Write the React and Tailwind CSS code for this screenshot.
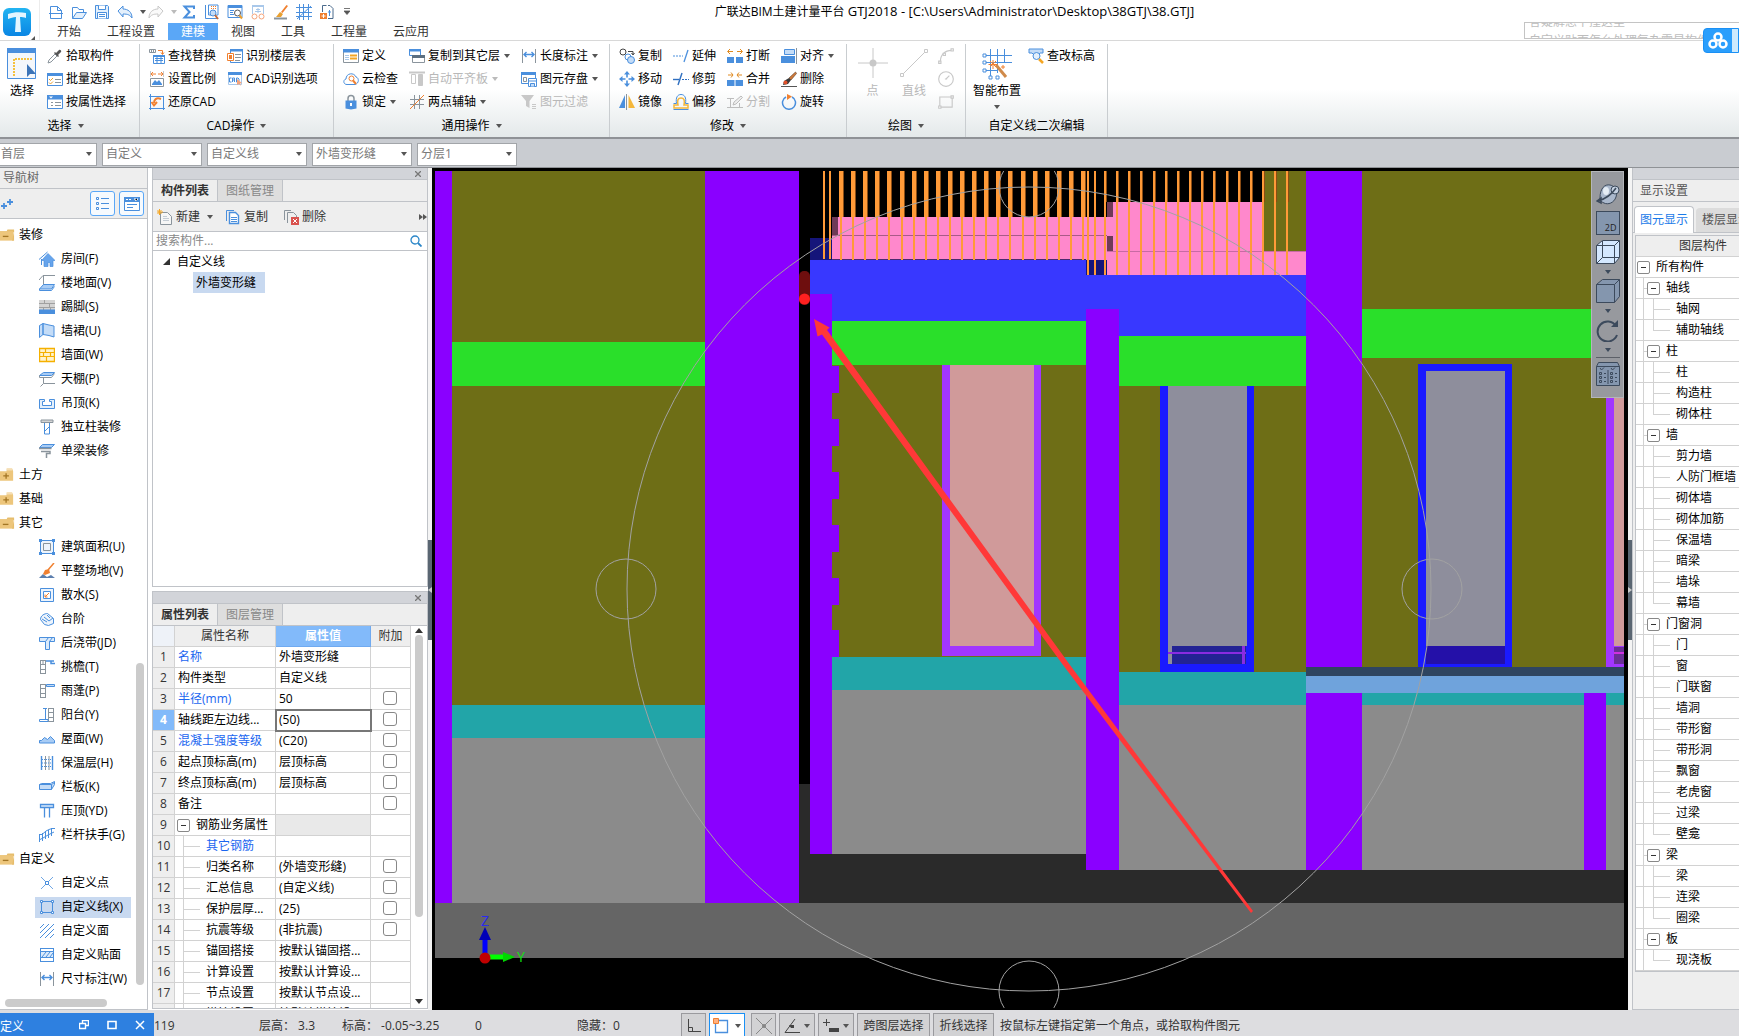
import React from "react";

const B = "#4a8fdd";
const L = "#c4dcf7";
const O = "#f08030";
const G = "#8a949c";
const D = "#c8c8c8";

/* ---------- icon drawings, 16 x 16 ---------- */
const art = {
  newDoc: <g fill="none" stroke={B}><path d="M2.5 14.5v-12h7l4 4v8z" fill="#fff" /><path d="M9.5 2.5v4h4M1 9.5h14" /></g>,
  open: <g fill="none" stroke={B}><path d="M1.5 14.500v-11h5l1.500 2h4.500v3" /><path d="M1.500 14.500l4-6h10l-4 6z" fill="#e4f0fc" /></g>,
  save: <g fill="none" stroke={B}><path d="M1.500 1.500h12l1 1v12h-13z" fill="#e4f0fc" /><path d="M4.500 1.500v4h7v-4M3.500 14.500v-6h9v6M5 10.500h6M5 12.500h6" fill="#fff" /></g>,
  undo: <path d="M1 7l5-5v3c5 0 9 3 9 9-2-3-4-4-9-4v3z" fill="#e4f0fc" stroke={B} />,
  redo: <path d="M15 7l-5-5v3c-5 0-9 3-9 9 2-3 4-4 9-4v3z" fill="#fafafa" stroke={D} />,
  sum: <path d="M13 5V2.500H3.500L8.500 8l-5 5.500H13V11" fill="none" stroke={B} strokeWidth="2" />,
  findTable: <g><path d="M1.500 1v13.500H14M4.500 1v10H14V1z" fill="#fff" stroke={B} /><path d="M7 2h1v1H7zM9 2h1v1H9zM11 2h1v1h-1zM7 4h1v1H7zM9 4h1v1H9zM11 4h1v1h-1z" fill={O} /><circle cx="9" cy="9" r="3" fill={L} stroke={B} /><path d="M11 11l3 4" stroke="#c56a3a" strokeWidth="2" /></g>,
  viewTable: <g><path d="M1 1.500h14v12H1z" fill="#fff" stroke={B} /><path d="M1 1h14v3H1z" fill={B} /><path d="M3 6.500h4M3 8.500h3M3 10.500h4" stroke={B} /><circle cx="10.500" cy="9" r="3" fill="#fff" stroke="#555" /><path d="M12.500 11.500l2.500 3" stroke="#e9a030" strokeWidth="2" /></g>,
  glasses: <g fill="none"><path d="M2.500 10V1.500h11V10" stroke="#a9c8ea" /><path d="M2 1h12v2H2z" fill="#a9c8ea" /><path d="M8 4v5M6 5.500h4M5 7.500h6" stroke="#a9c8ea" /><circle cx="4.500" cy="12.500" r="2.500" stroke="#f5a37a" /><circle cx="11.500" cy="12.500" r="2.500" stroke="#f5a37a" /></g>,
  broom: <g><path d="M1 14.500h13" stroke={G} strokeWidth="2" /><path d="M13.500 1L8 8l1.500 1L15 2z" fill={O} /><path d="M7 8l3 2-2 3H3z" fill="#e9a030" /></g>,
  netGrid: <path d="M3.500 0v16M7.500 0v16M12.500 0v16M0 3.500h16M0 8.500h16M0 12.500h16M1 15L15 2" stroke={B} fill="none" />,
  addDoc: <g><path d="M3.500 8V1.500h4M9 1.500h2l3 3v10H9" fill="none" stroke="#4a6a8c" /><path d="M1 9h7v6H1z" fill={O} /><path d="M4.500 10v4M2.500 12h4" stroke="#fff" /><path d="M9 8h3M10.500 6v6" stroke={B} /></g>,
  dropper: <g><path d="M1 15l1-3 6-6 2 2-6 6z" fill="#fff" stroke={G} /><path d="M7 5l4 4 1-1-1-1 3-3c1-1-1-3-2-2L9 5 8 4z" fill="#555" /></g>,
  batch: <g><path d="M.5 2.500h15v12H.5z" fill="#fff" stroke={B} /><path d="M0 2h16v3H0z" fill={B} /><path d="M8 8.500h6M8 11.500h6" stroke={G} /><path d="M2 8l1.500 1.500L6 7M2 11.500L3.500 13 6 10.500" stroke="#e9a030" fill="none" /></g>,
  byProp: <g><path d="M.5 1.500h15v13H.5z" fill="#fff" stroke={B} /><path d="M0 1h16v4.500H0z" fill={B} /><path d="M2 2.500h4L4 4.500z" fill="#fff" /><path d="M4 8.500h2M8 8.500h6M4 11.500h2M8 11.500h6" stroke={G} /></g>,
  replace: <g><path d="M.5 1.500h6v3h-6zM2.500 1.500v3M4.500 1.500v3" fill="none" stroke={G} /><path d="M9 2.500h4.500V6M12 4.500l1.500 2 1.500-2" fill="none" stroke={O} /><path d="M4.500 7.500h11v8h-11z" fill="#fff" stroke={B} /><path d="M4 7h12v2H4z" fill={B} /><path d="M6 10.500h8M6 12.500h8M8 9v6M12 9v6" stroke={B} /></g>,
  scale: <g><path d="M1.500 0v6M14.500 0v6" stroke={D} /><path d="M2 3h5M9 3h5M4 1L2 3l2 2M12 1l2 2-2 2" stroke={O} fill="none" /><path d="M1.500 7.500h13v8h-13z" fill="#fff" stroke={G} /><path d="M3 14v-1l3-4 2 2 2-2 3 4v1z" fill={B} /></g>,
  restore: <g><path d="M1.500 0v16M14.500 2v14M0 2.500h14M0 14.500h16" stroke={B} fill="none" /><path d="M12 5c-5-2-7 1-7 4M2.500 8L5 11.500 8 8" stroke={O} strokeWidth="2" fill="none" /></g>,
  floors: <g><path d="M3.500 1.500h12v13h-12z" fill="#fff" stroke={B} /><path d="M3 1h13v2.500H3z" fill={B} /><path d="M.5 5.500h6v7h-6z" fill="#fff" stroke={O} /><path d="M2 7h3v4H2z" fill={O} /><path d="M8 6.500h6M8 9.500h6M8 12.500h5" stroke={G} /></g>,
  cadOpt: <g><path d="M1.500 1.500h13v12h-13z" fill="#fff" stroke="#a9c8ea" /><path d="M1 1h14v3H1z" fill={B} /><path d="M4.500 7h-2v4h2M5.500 11V7h2v4M5.500 9h2M9.500 7v4h1.500l1-1V8l-1-1z" fill="none" stroke={B} /><path d="M10 8l5 4-2 .5 1 2.500-2-2-2 1z" fill="#f5a37a" /></g>,
  define: <g><path d="M.5 1.500h15v13H.5z" fill="#fff" stroke={G} /><path d="M0 1h16v3.500H0z" fill={B} /><path d="M2 7.500h4M2 9.500h4M2 11.500h4" stroke="#a9c8ea" /><path d="M7 6.500h7v5H7z" fill="#f5a623" /><path d="M7 9h7" stroke="#fff" /></g>,
  cloudCheck: <g><path d="M4 13.500c-4 0-4-5-1-5.500 0-6 8-7 10-2 3 .5 3.500 6.500-1 7.500z" fill="#fff" stroke={B} /><circle cx="8.500" cy="7.500" r="2.500" fill="none" stroke={O} /><path d="M10 9.500l3 3.500" stroke={O} strokeWidth="2" /></g>,
  lock: <g><path d="M5 7V4.500c0-4 6-4 6 0V7" fill="none" stroke={G} strokeWidth="1.500" /><path d="M2.500 6.500h11v8l-5.500 1-5.500-1z" fill={B} /><path d="M8 9v3" stroke="#fff" strokeWidth="2" /></g>,
  copyFloor: <g><path d="M.5 1.500h11v6h-11z" fill="#fff" stroke={B} /><path d="M0 1h12v2.500H0z" fill={B} /><path d="M3.500 7.500h12v7h-12z" fill="#fff" stroke={G} /><path d="M3 7h13v3H3z" fill="#5c6f80" /></g>,
  autoFlush: <g fill="none" stroke={D}><path d="M0 1.500h16" strokeWidth="2" /><path d="M2.500 3.500h4v9h-4z" /><path d="M9.500 3.500h4v11h-4z" fill={D} /></g>,
  twoPoint: <g fill="none"><path d="M5.500 1v14M10.500 1v14M1 5.500h14M1 10.500h14" stroke={G} /><path d="M1 15L15 1" stroke={O} /></g>,
  dim: <g fill="none" stroke={B}><path d="M1.500 1v14M14.500 1v14" stroke={G} /><path d="M3 6.500h10M5.500 4L3 6.500 5.500 9M10.500 4L13 6.500 10.500 9" strokeWidth="1.400" /></g>,
  store: <g><path d="M.5 1.500h14v11H.5z" fill="#fff" stroke={B} /><path d="M0 1h15v3H0z" fill={B} /><path d="M2.500 6.500h3v4h-3z" fill="none" stroke={G} /><path d="M7.500 7.500h8v8h-8z" fill="#fff" stroke={B} /><path d="M7.500 10h8M9.500 15.500v-3h4v3" stroke={B} fill={L} /></g>,
  filter: <g><path d="M0 1h13L8.500 7v7L5 12V7z" fill={D} /><path d="M11 10.500h4M11 12.500h4M11 14.500h4" stroke={D} /></g>,
  copy2: <g fill="#fff"><circle cx="4" cy="4" r="3" stroke="#444" /><path d="M9 3.500h5v3M12.500 5l1.500 2 1.500-2" fill="none" stroke="#444" /><circle cx="9" cy="9" r="3" stroke={B} /><circle cx="12" cy="12" r="3.500" fill={L} stroke={B} /></g>,
  move: <g fill={B}><path d="M8 0l3 3.500H5zM8 16l3-3.500H5zM0 8l3.500-3v6zM16 8l-3.500-3v6z" /><path d="M8 3v3.500M8 9.500V13M3 8h3.500M9.500 8H13" stroke={B} strokeWidth="1.600" /></g>,
  mirror: <g><path d="M6 1v13H0z" fill={B} /><path d="M9.500 1v13H16z" fill="#f5b73a" /><path d="M7.500 0v16" stroke={G} /></g>,
  extend: <g fill="none"><path d="M0 8h10" stroke={B} strokeDasharray="2 1" /><path d="M15 2l-4 12" stroke={B} strokeWidth="1.300" /></g>,
  trim: <g fill="none" stroke="#2f6fc0"><path d="M0 8.500h6" strokeWidth="1.400" /><path d="M9 2L5 14" strokeWidth="1.400" /><path d="M9 8.500h7" strokeDasharray="2 1" /></g>,
  offset: <g fill="none"><path d="M1 11h4c-1-5 0-7 3-7s4 2 3 7h4v3H1z" stroke="#f5b73a" strokeWidth="1.500" /><path d="M.5 9.500h3c-1-6 1-9 4.500-9s5.500 3 4.500 9h3M.5 15.500h15" stroke={B} /></g>,
  split2: <g><path d="M0 9h7v6H0zM9 9h7v6H9z" fill={B} /><path d="M1 3.500h5M10 3.500h5M3 1L.5 3.500 3 6M13 1l2.500 2.500L13 6" fill="none" stroke="#e08a20" /></g>,
  merge: <g><path d="M0 9h7.500v6H0zM8.500 9H16v6H8.500z" fill={B} /><path d="M1 4h5M10 4h5M4 1.500L6 4 4 6.500M12 1.500L10 4l2 2.500" fill="none" stroke="#e08a20" /></g>,
  divide: <g fill="none" stroke="#bdbdbd"><path d="M0 4.500h7M0 13.500h16M3.500 4v10M12.500 9v5" /><path d="M6 11l1-3 7-6 1.500 1.500L9 10z" fill="#eee" /></g>,
  align: <g><path d="M3.500 1.500h10v5h-10z" fill={L} stroke={B} /><path d="M0 8h14v7H0z" fill={B} /><path d="M15.500 0v16" stroke={G} /></g>,
  brush: <g><path d="M14.500 1L8 7l2 2 5.500-6.500z" fill="#d07a3a" stroke="#5a3a20" strokeWidth=".6" /><path d="M8 7l2 2-3 4-5 1 1-4z" fill="#3a3a3a" /><circle cx="4.500" cy="11.500" r="2" fill="#e0502a" /><path d="M0 15.500h16" stroke="#555" /></g>,
  rotate: <g fill="none"><path d="M5 3a6.500 6.500 0 1 0 6 0" stroke={B} strokeWidth="1.500" /><path d="M6 0l5 2.500L6 6z" fill={O} /></g>,
  arc: <g fill="none" stroke={D}><path d="M3 13C3 7 7 3 13 3" /><path d="M1.500 12.500h2v2h-2zM12.500 1.500h2v2h-2zM5.500 5.500h2v2h-2z" fill="#fff" /></g>,
  circ: <g fill="none" stroke={D}><circle cx="8" cy="8" r="6.500" /><path d="M8 8l3-3M7 8h2" /></g>,
  rect: <g fill="none" stroke={D}><path d="M2.500 3.500h11v9h-11z" /><path d="M1.500 11.500h2v2h-2zM12.500 2.500h2v2h-2z" fill="#fff" /></g>,
  elev: <g><path d="M1 1h14v4h-3l-4 4-4-4H1z" fill={L} stroke={B} /><circle cx="8.500" cy="8" r="3.500" fill="#e4f0fc" stroke={B} /><path d="M11 11l4 4" stroke="#f5a623" strokeWidth="2.500" /></g>,
  house: <g><path d="M0 8.500L8.500 1M2.500 8v6" stroke={B} fill="none" /><path d="M9 2.500l7 7h-2v6h-3v-4H9v4H5v-6H2.500z" fill="#66a4ec" stroke={B} strokeWidth=".7" /></g>,
  floorSlab: <g fill="none"><path d="M0 5l4-4.500h12M4.500 1v9" stroke={G} /><path d="M.5 14l4-4.500h11l-3 4.500z" fill="#a8ccf5" stroke={B} /><path d="M.5 14v1.500h12l3-4" stroke={B} /></g>,
  skirting: <g><path d="M0 1h16v10H0z" fill="#d4d4d4" /><path d="M0 4.500h16M0 8.500h16M5.500 1v3M10.500 5v3M4.500 9v2M11.500 9v2" stroke="#a0a0a0" /><path d="M0 10.500h16V15H0z" fill={B} /></g>,
  dado: <path d="M.5 2.500L4 .5v11L.5 14.500zM4 .5l6 1.500 5 1v11l-5-1.500-6-1z" fill={L} stroke={B} />,
  brick: <g><path d="M.5 1.500h15v13H.5z" fill="#fff3cc" stroke="#f5b000" strokeWidth="1.400" /><path d="M1 5.500h14M1 9.500h14M6.500 2v3M11.500 6v3M4.500 6v3M7.500 10v4" stroke="#f5b000" strokeWidth="1.200" /></g>,
  ceiling: <g fill="none"><path d="M.5 4.500l4-3h11l-3 3z" fill="#a8ccf5" stroke={B} /><path d="M.5 4.500v2h12l3-4M4.500 7v5.500M4.500 12.500H16M4.500 12.500l-3 3" stroke={G} /></g>,
  suspended: <path d="M.5 4.500h5v2h-2v4h9v-4h-2v-2h5v9H.500z" fill="#e4f0fc" stroke={B} />,
  pillar: <g><path d="M2 1h12v2.500H2z" fill="#d4d4d4" stroke={G} /><path d="M5.500 4v11h5V4" fill="#fff" stroke={B} /><path d="M6 12l4-4" stroke={B} /></g>,
  beam: <g fill="none"><path d="M.5 4.500l3-3h12l-3 3z" fill="#a8ccf5" stroke={B} /><path d="M.5 4.500v1h12M2 8.500h9v2H7.500V15" stroke={G} strokeWidth="1.500" /></g>,
  area: <g fill="none"><path d="M1.500 1.500h13v13h-13z" fill="#edf4fc" stroke={B} /><path d="M4.500 4.500h7v7h-7z" stroke={G} /><path d="M0 0h3v3H0zM13 0h3v3h-3zM0 13h3v3H0zM13 13h3v3h-3z" fill={B} /></g>,
  level: <g><path d="M0 15l4-4 4 3 4-2 4 3z" fill="#5c7fae" /><path d="M15 0L9 7" stroke={O} strokeWidth="1.500" /><path d="M6 7l4-1 1 4-5 2-2-1z" fill={O} /></g>,
  apron: <g fill="none"><path d="M1.500 1.500h13v13h-13z" stroke={B} fill="#edf4fc" /><path d="M4.500 4.500h7v7h-7z" stroke={B} fill="#fff" /><path d="M10 6l-4 4M6 7.500V10h2.500" stroke={O} /></g>,
  steps: <g fill="none" stroke={B}><path d="M1.500 8.500c0-4 4-6 7-6l6 5v5l-5 2-4-1z" fill="#edf4fc" /><path d="M3 8l5 3M5 6l5 4 4-3M8 4l3 3" /></g>,
  castBelt: <path d="M.5 2.500h15v4h-5v8h-4v-8h-6zM6.500 6.500l3-4M10.500 6.500l3-4" fill="#dcebfb" stroke={B} />,
  cornice: <g fill="none"><path d="M1.500 1v14M6.500 1v14M1.500 1.500h5M1.500 5.500h5M1.500 10.500h5M1.500 14.500h5M4 2v3" stroke={G} /><path d="M7 2h8M12 2v2.500h4" stroke={B} strokeWidth="1.500" /></g>,
  canopy: <g fill="none"><path d="M1.500 1v14M6.500 1v14M1.500 1.500h5M1.500 5.500h5M1.500 10.500h5M1.500 14.500h5" stroke={G} /><path d="M7.500 1.500h8v2h-8z" stroke={B} fill={L} /></g>,
  balcony: <g fill="none"><path d="M9.500 1v14M14.500 1v14M9.500 1.500h5M9.500 5.500h5M9.500 10.500h5M9.500 14.500h5" stroke={G} /><path d="M4 1.500h4M6.500 2v10M1 12.500h8v2H.5v-2z" stroke={B} /></g>,
  roof: <path d="M.5 12V9.500h2l3-3 3 2 3-3 4 4V12z" fill="#a8ccf5" stroke={B} />,
  insul: <g fill="none"><path d="M2.500 1v14M13.500 1v14" stroke={B} strokeWidth="1.400" /><path d="M6.500 1v14M10 1v14" stroke={G} /><path d="M3 4.500h10M3 8h10M3 11.500h10" stroke={B} strokeDasharray="1 1" /></g>,
  railSlab: <path d="M.5 5.500l2-1h9l4-2v3l-3 5h-12zM12.500 5.500v5M.5 5.500h12l3-2" fill={L} stroke={B} />,
  coping: <path d="M1.500 1.500h13v3h-13zM5.500 4.500v10M10.500 4.500v10" fill="#dcebfb" stroke={B} strokeWidth="1.300" />,
  rail: <path d="M.5 15V7M3.500 14V6M6.500 12V4M9.500 11V3M12.500 9V1M0 7.500h3L7 4l3-1.500 3-1h3M0 13l4-2 5-3 6-3" fill="none" stroke={B} />,
  cPoint: <g fill="none" stroke={B}><path d="M2 2l12 12M14 2L2 14" strokeWidth=".8" /><path d="M6.500 6.500h3v3h-3z" fill="#fff" /></g>,
  cLine: <g fill="none" stroke={B}><path d="M2.500 2.500h11v11h-11z" /><path d="M1.500 1.500h2v2h-2zM12.500 1.500h2v2h-2zM1.500 12.500h2v2h-2zM12.500 12.500h2v2h-2z" fill="#fff" /></g>,
  cFace: <path d="M1 5l4-4M1 10l9-9M1 15L15 1M6 15l9-9M11 15l4-4" stroke={B} fill="none" />,
  cStick: <g fill="none" stroke={B}><path d="M1 1.500h14M1 14.500h14M1.500 1v14M14.500 1v14" /><path d="M1.500 4.500h13v6h-13z" fill="#dcebfb" /><path d="M3 10l4-5M7 10l4-5M11 10l3-4" /></g>,
  folderOpen: <g><path d="M0 4h7l1-2h7v3H0z" fill="#e6bd6c" /><path d="M0 4h14v10H0z" fill="#edc67c" /><path d="M15 3v11h-2z" fill="#e6bd6c" /><path d="M3 9.500h6" stroke="#a37625" strokeWidth="1.400" /></g>,
  folderShut: <g><path d="M7 1h6l1 3v10H0V4h7z" fill="#edc67c" /><path d="M7 2.500h6" stroke="#fff" strokeWidth=".7" /><path d="M3.500 9h6M6.500 6v6" stroke="#a37625" strokeWidth="1.400" /></g>,
  newItem: <g><path d="M3.500 3.500h7l4 4v8h-11z" fill="#f6f6f6" stroke={G} /><path d="M6 7.500h4M6 9.500h6M6 11.500h6" stroke="#c4ccd4" /><path d="M2.500 0v6M0 3h6M.5 1l4 4M4.500 1l-4 4" stroke="#f5a623" /></g>,
  copyItem: <g><path d="M1.500 12V1.500H9" fill="none" stroke={B} /><path d="M4.500 3.500h6l3 3v8h-9z" fill="#fff" stroke={B} strokeWidth="1.400" /><path d="M6 8.500h6M6 10.500h6M6 12.500h6" stroke={B} /></g>,
  delItem: <g><path d="M1.500 11V1.500H8M4.500 14V3.500h6l3 3V8" fill="none" stroke={G} /><path d="M8 8h8v8H8z" fill="#d9534f" /><path d="M10 10l4 4M14 10l-4 4" stroke="#fff" /></g>,
};

function Icon({ name, className = "size-4" }) {
  return (
    <svg viewBox="0 0 16 16" className={"shrink-0 " + className} aria-hidden="true">
      {art[name]}
    </svg>
  );
}

function Caret({ className = "text-[#555]" }) {
  return (
    <svg viewBox="0 0 6 4" className={"h-1 w-1.5 shrink-0 " + className} aria-hidden="true">
      <path d="M0 0h6L3 4z" fill="currentColor" />
    </svg>
  );
}

/* ---------- title bar and ribbon ---------- */
const quick = ["newDoc", "open", "save", "undo", "redo", "sum", "findTable", "viewTable", "glasses", "broom", "netGrid", "addDoc"];
const tabs = ["开始", "工程设置", "建模", "视图", "工具", "工程量", "云应用"];

function Header() {
  return (
    <header className="relative flex h-[41px] shrink-0 border-b border-[#d8d8d8] bg-white">
      <div className="relative w-10 shrink-0 border-r border-[#ececec] pl-[3px] pt-2">
        <svg viewBox="0 0 28 28" className="size-7" aria-label="GTJ">
          <defs>
            <linearGradient id="lg" x1="0" y1="0" x2="0" y2="1">
              <stop offset="0" stopColor="#22b4f2" />
              <stop offset="1" stopColor="#0a86e4" />
            </linearGradient>
          </defs>
          <rect width="28" height="28" rx="6" fill="url(#lg)" />
          <path d="M5 6c6-2 12-2 18-1v5c-2-1-4-1-6-1l1 15h-6l1-15c-3 0-5 1-8 2z" fill="#e4f6ff" />
        </svg>
        <svg viewBox="0 0 4 4" className="absolute right-1 bottom-0 size-1"><path d="M4 0v4H0z" fill="#555" /></svg>
      </div>
      <div className="flex min-w-0 flex-1 flex-col">
        <div className="flex h-6 items-center gap-[7px] pl-2">
          {quick.map((q) => (
            <React.Fragment key={q}>
              <button aria-label={q} className="flex"><Icon name={q} /></button>
              {q === "undo" && <Caret className="-mr-[5px] text-[#555]" />}
              {q === "redo" && <Caret className="-mr-[3px] text-[#bbb]" />}
            </React.Fragment>
          ))}
          <svg viewBox="0 0 6 7" className="ml-0.5 h-[7px] w-1.5"><path d="M0 .5h6M0 3h6L3 6.500z" fill="#555" stroke="#555" strokeWidth=".8" /></svg>
        </div>
        <nav className="flex h-[17px] pl-1">
          {tabs.map((t) => (
            <button key={t} className={"flex items-center px-[13px] " + (t === "建模" ? "bg-[#5aa7f7] text-white" : "text-[#333]")}>
              {t}
            </button>
          ))}
        </nav>
      </div>
      <h1 className="absolute inset-x-0 top-0.5 pl-[170px] text-center leading-[18px] text-black">
        广联达BIM土建计量平台 <span className="text-[13px]">GTJ2018 - [C:\Users\Administrator\Desktop\38GTJ\38.GTJ]</span>
      </h1>
      <div className="absolute right-0 top-[22px] flex h-[17px] w-[215px] flex-col justify-center overflow-hidden border border-r-0 border-[#c4c4c4] bg-white pl-1 whitespace-nowrap text-[#bdbdbd]">
        <span className="leading-[19px]">答疑解惑下撞这里</span>
        <span className="leading-[19px]">自定义贴面怎么处理复杂零星构件的</span>
      </div>
      <button aria-label="云盘" className="absolute right-0 top-7 z-10 flex h-[25px] w-9 items-center justify-between overflow-hidden rounded-l border border-[#1a90f5] bg-[#2a9efc] pl-1">
        <svg viewBox="0 0 20 18" className="h-[18px] w-5" fill="none" stroke="#fff" strokeWidth="2.500">
          <circle cx="10" cy="5" r="3.500" /><circle cx="5" cy="12" r="3.500" /><circle cx="15" cy="12" r="3.500" />
        </svg>
        <span className="h-full w-1.5 bg-[#cdeafd]" />
      </button>
    </header>
  );
}

function Tool({ icon, label, caret, off }) {
  return (
    <button className={"flex h-[23px] items-center whitespace-nowrap " + (off ? "text-[#b8b8b8]" : "text-black")}>
      <Icon name={icon} />
      <span className="ml-[3px]">{label}</span>
      {!!caret && <span className="ml-1 flex"><Caret className={off ? "text-[#bbb]" : "text-[#555]"} /></span>}
    </button>
  );
}

function Group({ label, caret = true, className, pad = "", children }) {
  return (
    <section className={"flex shrink-0 flex-col border-r border-[#c9cdd0] " + className}>
      <div className={"flex h-[69px] " + pad}>{children}</div>
      <div className="flex h-6 items-center justify-center gap-1.5 pt-0.5 text-black">
        {label}
        {caret && <Caret />}
      </div>
    </section>
  );
}

function Tools({ items }) {
  return (
    <div className="grid grid-flow-col grid-rows-3 content-start gap-x-[11px]">
      {items.map((i) => <Tool key={i[1]} icon={i[0]} label={i[1]} caret={i[2]} off={i[3]} />)}
    </div>
  );
}

function Ribbon() {
  return (
    <div className="flex h-[98px] shrink-0 overflow-hidden border-b-2 border-[#8f9296] bg-linear-to-b from-white from-50% to-[#e4e9ea] pt-[3px]">
      <Group label="选择" className="w-[140px] pr-2">
        <button className="mr-2.5 flex w-[37px] shrink-0 flex-col items-end pt-1 pr-px text-black">
          <svg viewBox="0 0 29 31" className="h-[31px] w-[29px]">
            <path d="M.5.500h28v30H.500z" fill="#f4f7fb" stroke={B} /><path d="M0 0h29v5H0z" fill={B} />
            <path d="M7 28V11h19" fill="none" stroke="#f5b000" strokeWidth="1.500" strokeDasharray="2 1" />
            <path d="M20 16v13l3-3h6z" fill="#3c74b8" />
          </svg>
          <span className="mr-0.5 mt-1 leading-4">选择</span>
        </button>
        <Tools items={[["dropper", "拾取构件"], ["batch", "批量选择"], ["byProp", "按属性选择"]]} />
      </Group>
      <Group label="CAD操作" className="w-[194px]" pad="pl-[9px]">
        <Tools items={[["replace", "查找替换"], ["scale", "设置比例"], ["restore", "还原CAD"], ["floors", "识别楼层表"], ["cadOpt", "CAD识别选项"]]} />
      </Group>
      <Group label="通用操作" className="w-[276px]" pad="pl-[9px]">
        <Tools
          items={[
            ["define", "定义"], ["cloudCheck", "云检查"], ["lock", "锁定", 1],
            ["copyFloor", "复制到其它层", 1], ["autoFlush", "自动平齐板", 1, 1], ["twoPoint", "两点辅轴", 1],
            ["dim", "长度标注", 1], ["store", "图元存盘", 1], ["filter", "图元过滤", 0, 1],
          ]}
        />
      </Group>
      <Group label="修改" className="w-[237px]" pad="pl-[9px]">
        <Tools
          items={[
            ["copy2", "复制"], ["move", "移动"], ["mirror", "镜像"],
            ["extend", "延伸"], ["trim", "修剪"], ["offset", "偏移"],
            ["split2", "打断"], ["merge", "合并"], ["divide", "分割", 0, 1],
            ["align", "对齐", 1], ["brush", "删除"], ["rotate", "旋转"],
          ]}
        />
      </Group>
      <Group label="绘图" className="w-[119px]">
        <div className="flex gap-3 pl-[11px] text-[#b8b8b8]">
          <button className="flex w-[29px] flex-col items-center pt-1">
            <svg viewBox="0 0 30 30" className="size-[30px]"><path d="M15 0v30M0 15h30" stroke={D} /><circle cx="15" cy="15" r="3.500" fill={D} /></svg>
            <span className="mt-[5px] leading-4">点</span>
          </button>
          <button className="flex w-[30px] flex-col items-center pt-1">
            <svg viewBox="0 0 30 30" className="size-[30px]"><path d="M3 27L27 3" stroke={D} /><path d="M1.500 25.500h3v3h-3zM25.500 1.500h3v3h-3z" fill="#fff" stroke={D} /></svg>
            <span className="mt-[5px] leading-4">直线</span>
          </button>
          <div className="-ml-1 flex flex-col">
            {["arc", "circ", "rect"].map((n) => (
              <button key={n} aria-label={n} className="flex h-[23px] items-center"><Icon name={n} className="size-[18px]" /></button>
            ))}
          </div>
        </div>
      </Group>
      <Group label="自定义线二次编辑" caret={false} className="w-[142px]">
        <button className="flex w-[62px] flex-col items-center pt-1 text-black">
          <svg viewBox="0 0 30 32" className="h-8 w-[30px]" fill="none">
            <path d="M8.500 1v28M15.500 1v24M22.500 1v14M2 7.500h28M2 14.500h28M2 22.500h14" stroke={B} />
            <path d="M1 6h3v3H1zM1 13h3v3H1zM1 21h3v3H1zM7 28h3v3H7zM14 28h3v3h-3z" fill="#fff" stroke={B} />
            <path d="M14 17l10 12" stroke="#d08a4a" strokeWidth="3" /><path d="M11 12v9M6.500 16.500h9M8 13l6 6M14 13l-6 6M19 19h4M21 17v4" stroke={O} />
          </svg>
          <span className="mt-[3px] leading-4">智能布置</span>
          <span className="mt-1.5 flex"><Caret /></span>
        </button>
        <Tools items={[["elev", "查改标高"]]} />
      </Group>
    </div>
  );
}

const combos = ["首层", "自定义", "自定义线", "外墙变形缝", "分层1"];
function ComboBar() {
  return (
    <div className="flex h-[29px] shrink-0 items-center gap-[5px] overflow-hidden border-b border-[#8f9296] bg-[#c9ccd1] pt-0.5">
      {combos.map((c, i) => (
        <div key={c} className={"relative h-[23px] shrink-0 " + (i ? "w-[100px]" : "w-[97px]")}>
          <select aria-label={c} className={"size-full appearance-none border border-[#a2a5a9] bg-white text-[#7a7a7a] outline-none " + (i ? "pl-[3px]" : "border-l-0 pl-px")}>
            <option>{c}</option>
          </select>
          <span className="pointer-events-none absolute right-[5px] top-[9px] flex"><Caret /></span>
        </div>
      ))}
    </div>
  );
}

/* ---------- navigation tree ---------- */
const nav = [
  ["装修", "folderOpen"],
  ["房间(F)", "house", 1], ["楼地面(V)", "floorSlab", 1], ["踢脚(S)", "skirting", 1], ["墙裙(U)", "dado", 1], ["墙面(W)", "brick", 1],
  ["天棚(P)", "ceiling", 1], ["吊顶(K)", "suspended", 1], ["独立柱装修", "pillar", 1], ["单梁装修", "beam", 1],
  ["土方", "folderShut"], ["基础", "folderShut"], ["其它", "folderOpen"],
  ["建筑面积(U)", "area", 1], ["平整场地(V)", "level", 1], ["散水(S)", "apron", 1], ["台阶", "steps", 1], ["后浇带(JD)", "castBelt", 1],
  ["挑檐(T)", "cornice", 1], ["雨蓬(P)", "canopy", 1], ["阳台(Y)", "balcony", 1], ["屋面(W)", "roof", 1], ["保温层(H)", "insul", 1],
  ["栏板(K)", "railSlab", 1], ["压顶(YD)", "coping", 1], ["栏杆扶手(G)", "rail", 1],
  ["自定义", "folderOpen"],
  ["自定义点", "cPoint", 1], ["自定义线(X)", "cLine", 1, 1], ["自定义面", "cFace", 1], ["自定义贴面", "cStick", 1], ["尺寸标注(W)", "dim", 1],
];

function NavTree() {
  return (
    <aside className="flex w-[148px] shrink-0 flex-col border-r border-b border-[#c0c3c8] bg-white">
      <h2 className="flex h-[21px] shrink-0 items-center border-b border-[#c0c3c8] bg-[#eee] pl-[3px] text-[#666]">导航树</h2>
      <div className="flex h-[30px] shrink-0 items-center border-b border-[#c0c3c8] bg-[#eee] pr-[3px]">
        <button aria-label="展开" className="mr-auto flex">
          <svg viewBox="0 0 14 12" className="h-3 w-3.5"><path d="M4 5v6M1 8h6M10 1v6M7 4h6" stroke={B} strokeWidth="1.800" /></svg>
        </button>
        <button aria-label="列表" className="mr-1 flex size-[25px] items-center justify-center rounded-[3px] border border-[#5aa7f7] bg-[#f6fafe]">
          <svg viewBox="0 0 14 14" className="size-3.5" fill="none" stroke={B}><path d="M.5.500h2v2h-2zM.5 5.500h2v2h-2zM.5 10.500h2v2h-2zM5 1.500h8M5 6.500h8M5 11.500h8" /></svg>
        </button>
        <button aria-label="卡片" className="flex size-[25px] items-center justify-center rounded-[3px] border border-[#5aa7f7] bg-[#f6fafe]">
          <svg viewBox="0 0 16 14" className="h-3.5 w-4"><path d="M.5.500h15v13H.500z" fill="#fff" stroke={B} /><path d="M0 0h16v5H0z" fill={B} /><path d="M2 2.500h6M10 2h4l-2 2z" stroke="#fff" strokeDasharray="2 1" /><path d="M3 7.500h10M3 10.500h6" stroke={B} /></svg>
        </button>
      </div>
      <div className="flex min-h-0 flex-1">
        <ul className="min-w-0 flex-1 overflow-hidden pt-1">
          {nav.map(([label, icon, child, sel]) => (
            <li key={label} className="flex h-6 items-center whitespace-nowrap text-black">
              {child ? (
                <button className={"ml-[35px] flex h-[21px] items-center gap-1.5 pl-1 " + (sel ? "bg-[#c8d9f0] pr-2" : "")}>
                  <Icon name={icon} />
                  {label}
                </button>
              ) : (
                <button className="flex items-center gap-1"><Icon name={icon} className="h-4 w-[15px]" />{label}</button>
              )}
            </li>
          ))}
        </ul>
        <div className="flex w-[11px] shrink-0 flex-col justify-end pb-1"><div className="h-[322px] w-2 rounded-full bg-[#cbcbcb]" /></div>
      </div>
      <div className="flex h-5 shrink-0 items-end pl-[5px]"><div className="mb-0.5 h-2 w-[102px] rounded-full bg-[#cbcbcb]" /></div>
    </aside>
  );
}

/* ---------- component list and properties ---------- */
function PaneTop({ a, b }) {
  return (
    <>
      <div className="flex h-3 shrink-0 items-center justify-end border-b border-[#c0c3c8] bg-[#d2d4d9] pr-1.5">
        <button aria-label="关闭" className="flex"><svg viewBox="0 0 6 6" className="size-1.5"><path d="M0 0l6 6M6 0L0 6" stroke="#777" strokeWidth="1.300" /></svg></button>
      </div>
      <div className="flex h-[22px] shrink-0 border-b border-[#c0c3c8] bg-[#eee]">
        <button className="w-16 font-bold text-[#333]">{a}</button>
        <button className="w-[66px] border-x border-[#c0c3c8] bg-[#dedede] text-[#888]">{b}</button>
      </div>
    </>
  );
}

function ComponentList() {
  return (
    <section className="flex h-[419px] shrink-0 flex-col border border-t-0 border-[#c0c3c8] bg-white">
      <PaneTop a="构件列表" b="图纸管理" />
      <div className="flex h-[30px] shrink-0 items-center border-b border-[#c0c3c8] bg-[#eee] pl-1 text-[#333]">
        <button className="flex items-center gap-[3px]"><Icon name="newItem" />新建<span className="ml-1 flex"><Caret /></span></button>
        <button className="ml-3 flex items-center gap-[3px]"><Icon name="copyItem" />复制</button>
        <button className="ml-[15px] flex items-center gap-[3px]"><Icon name="delItem" />删除</button>
        <svg viewBox="0 0 8 6" className="ml-auto h-1.5 w-2"><path d="M0 0l4 3-4 3zM4 0l4 3-4 3z" fill="#555" /></svg>
      </div>
      <div className="flex h-[19px] shrink-0 items-center border-b border-[#c0c3c8] pr-[5px]">
        <input aria-label="搜索构件" placeholder="搜索构件..." className="min-w-0 flex-1 pl-[3px] outline-none placeholder:text-[#888]" />
        <svg viewBox="0 0 12 12" className="size-3" fill="none" stroke="#2a86c8" strokeWidth="1.300"><circle cx="5" cy="5" r="4" /><path d="M8 8l3.500 3.500" strokeWidth="1.800" /></svg>
      </div>
      <ul className="text-black">
        <li className="flex h-[21px] items-center gap-[7px] pl-2.5">
          <svg viewBox="0 0 7 7" className="size-[7px]"><path d="M7 0v7H0z" fill="#333" /></svg>自定义线
        </li>
        <li className="flex h-[21px] pl-10"><button className="bg-[#c8d9f0] pr-[9px] pl-[3px]">外墙变形缝</button></li>
      </ul>
    </section>
  );
}

const props = [
  ["名称", "外墙变形缝", 0, "b"], ["构件类型", "自定义线", 0], ["半径(mm)", "50", 1, "b"], ["轴线距左边线...", "(50)", 1, "s"],
  ["混凝土强度等级", "(C20)", 1, "b"], ["起点顶标高(m)", "层顶标高", 1], ["终点顶标高(m)", "层顶标高", 1], ["备注", "", 1],
  ["钢筋业务属性", "", 0, "g"], ["其它钢筋", "", 0, "cb"], ["归类名称", "(外墙变形缝)", 1, "c"], ["汇总信息", "(自定义线)", 1, "c"],
  ["保护层厚...", "(25)", 1, "c"], ["抗震等级", "(非抗震)", 1, "c"], ["锚固搭接", "按默认锚固搭...", 0, "c"],
  ["计算设置", "按默认计算设...", 0, "c"], ["节点设置", "按默认节点设...", 0, "c"], ["搭接设置", "按默认搭接设...", 0, "c"],
];

function Minus() {
  return (
    <button aria-label="折叠" className="flex size-[13px] shrink-0 items-center justify-center rounded-xs border border-[#888] bg-white">
      <span className="h-px w-[5px] bg-[#333]" />
    </button>
  );
}

function PropertyTable() {
  const th = "border-r border-b border-[#d2d2d2] p-0 font-normal";
  return (
    <section className="mt-[4px] flex min-h-0 flex-1 flex-col border border-[#c0c3c8] bg-white">
      <PaneTop a="属性列表" b="图层管理" />
      <div className="flex min-h-0 flex-1 overflow-hidden">
        <table className="h-fit w-[258px] table-fixed border-separate border-spacing-0 text-black">
          <thead>
            <tr className="h-[21px] bg-[#eee] text-[#333]">
              <th className={th + " w-[22px] bg-[#eef2f8]"} aria-label="序号" />
              <th className={th + " w-[101px]"}>属性名称</th>
              <th className="w-[95px] border-r border-b border-[#70aaf0] bg-[#82bafa] p-0 font-bold text-white">属性值</th>
              <th className={th + " w-10"}>附加</th>
            </tr>
          </thead>
          <tbody>
            {props.map(([name, value, check, kind = ""], i) => (
              <tr key={name} className="h-[21px]">
                <td className={"border-r border-b border-[#d2d2d2] p-0 text-center " + (kind === "s" ? "bg-[#82bafa] font-bold text-white" : "bg-[#eee] text-[#333]")}>{i + 1}</td>
                <td className="border-r border-b border-[#d2d2d2] p-0">
                  <div className={"flex h-5 items-center overflow-hidden whitespace-nowrap " + (kind.includes("b") ? "text-[#1a66f0]" : "")}>
                    {kind === "g" && <span className="mr-1.5 ml-0.5 flex"><Minus /></span>}
                    {kind.includes("c") && <span className="mr-1.5 ml-2 flex h-full w-[17px] items-center border-l border-[#d2d2d2]"><span className="h-px w-full bg-[#d2d2d2]" /></span>}
                    <span className={kind === "g" || kind.includes("c") ? "" : "pl-[3px]"}>{name}</span>
                  </div>
                </td>
                <td className={"border-r border-b border-[#d2d2d2] p-0 pl-[3px] whitespace-nowrap " + (kind === "s" ? "outline-2 -outline-offset-1 outline-[#777]" : "") + (kind === "g" ? " bg-[#e9e9e9]" : "")}>
                  {value}
                </td>
                <td className="border-r border-b border-[#d2d2d2] p-0">
                  {!!check && <input type="checkbox" aria-label={name} className="mr-0.5 mb-0.5 ml-3 block size-3.5 appearance-none rounded-[3px] border border-[#888] bg-white" />}
                </td>
              </tr>
            ))}
          </tbody>
        </table>
        <div className="flex flex-1 flex-col items-center pt-0.5 pb-1">
          <svg viewBox="0 0 8 5" className="h-[5px] w-2"><path d="M0 5h8L4 0z" fill="#333" /></svg>
          <div className="mt-0.5 h-[282px] w-2 rounded-full bg-[#cbcbcb]" />
          <svg viewBox="0 0 8 5" className="mt-auto h-[5px] w-2"><path d="M0 0h8L4 5z" fill="#333" /></svg>
        </div>
      </div>
    </section>
  );
}

/* ---------- 3D model view ---------- */
const rects = [
  [435, 171, 17, 732, "#8a00ff"], [452, 171, 253, 534, "#6e6e16"], [452, 342, 253, 44, "#2adf2a"], [452, 705, 253, 33, "#22a5a8"], [452, 738, 253, 165, "#8b8b8b"],
  [705, 171, 94, 732, "#8a00ff"], [799, 784, 12, 119, "#2a2a2a"], [810, 854, 814, 49, "#2a2a2a"],
  [810, 238, 22, 23, "#15157a"], [1086, 258, 21, 18, "#15157a"], [810, 260, 276, 62, "#3838ff"], [1086, 275, 220, 62, "#3838ff"],
  [832, 321, 254, 45, "#2adf2a"], [832, 365, 254, 292, "#6e6e16"], [832, 657, 254, 33, "#22a5a8"], [832, 690, 254, 164, "#8b8b8b"],
  [810, 294, 22, 560, "#8a00ff"], [942, 365, 99, 291, "#a236ff"], [950, 365, 84, 281, "#d09a9a"],
  [1119, 336, 187, 50, "#2adf2a"], [1119, 386, 187, 286, "#6e6e16"], [1119, 672, 187, 33, "#22a5a8"], [1119, 705, 187, 165, "#8b8b8b"],
  [1086, 309, 33, 561, "#8a00ff"], [1160, 386, 94, 286, "#1a1aff"], [1168, 386, 79, 260, "#8e8e9c"], [1168, 646, 4, 18, "#8e8e9c"], [1172, 646, 74, 18, "#232394"],
  [1168, 652, 78, 2, "#8a2be2"], [1242, 646, 3, 18, "#8a2be2"],
  [1262, 171, 44, 82, "#6e6e16"],
  [1362, 171, 262, 496, "#6e6e16"], [1362, 309, 262, 49, "#2adf2a"], [1362, 693, 262, 12, "#22a5a8"], [1362, 705, 262, 165, "#8b8b8b"],
  [1306, 171, 56, 699, "#8a00ff"], [1418, 364, 94, 303, "#1a1aff"], [1426, 371, 79, 275, "#8e8e9c"], [1426, 646, 79, 18, "#2410a8"],
  [1606, 380, 8, 287, "#a236ff"], [1614, 380, 10, 266, "#d09a9a"], [1614, 646, 10, 21, "#a236ff"], [1614, 647, 10, 17, "#6a2f96"], [1614, 652, 10, 2, "#d030e0"],
  [1306, 667, 318, 10, "#2f4560"], [1306, 676, 318, 17, "#6fa3dc"], [1584, 693, 22, 177, "#8a00ff"],
  [435, 903, 1189, 55, "#656565"],
  [832, 217, 275, 43, "#ff88cc"], [832, 235, 275, 1, "#a85a88"], [832, 217, 6, 18, "#6f3a58"],
  [1107, 202, 155, 73, "#ff88cc"], [1262, 251, 44, 24, "#ff88cc"], [1107, 251, 199, 1, "#c86aa4"], [1107, 202, 6, 15, "#6f3a58"], [1107, 236, 6, 15, "#6f3a58"],
  [1086, 260, 21, 15, "#15157a"], [832, 259, 254, 1, "#4a2a70"],
];
const leftBars = Array.from({ length: 21 }, (_, i) => Math.round(839 + i * 12.1));
const rightBars = Array.from({ length: 16 }, (_, i) => Math.round(1104 + i * 12.15));
const notches = [366, 419, 472, 525, 578, 630];
const rings = [[1029, 187], [1029, 991], [626, 589], [1432, 589]];

function Scene() {
  return (
    <svg viewBox="432 168 1196 842" preserveAspectRatio="xMidYMid slice" className="absolute inset-0 size-full" role="img" aria-label="三维模型">
      <defs><clipPath id="vp"><path d="M435 171h1189v837H435z" /></clipPath></defs>
      <path d="M432 168h1196v842H432z" fill="#000" />
      <g shapeRendering="crispEdges">
        {rects.map(([x, y, w, h, f], i) => <rect key={i} x={x} y={y} width={w} height={h} fill={f} />)}
        {notches.map((y) => <rect key={y} x="832" y={y} width="7" height="27" fill="#8a00ff" />)}
        {leftBars.map((x) => (
          <g key={x}>
            <rect x={x} y="171" width="4" height="46" fill="#ff9a38" /><rect x={x + 4} y="171" width="1" height="46" fill="#8a4c14" />
            <rect x={x + 1} y="217" width="2" height="43" fill="#ff9a38" />
          </g>
        ))}
        {rightBars.map((x) => (
          <g key={x}><rect x={x} y="171" width="2" height="104" fill="#ff9a38" /><rect x={x + 2} y="171" width="1" height="31" fill="#8a4c14" /></g>
        ))}
        {[823, 829].map((x) => <rect key={x} x={x} y="171" width="2" height="88" fill="#ff9a38" />)}
        {[1087, 1094].map((x) => <rect key={x} x={x} y="171" width="2" height="104" fill="#ff9a38" />)}
      </g>
      <g fill="none" stroke="#a2a2a2" clipPath="url(#vp)">
        <circle cx="1029" cy="589" r="402" />
        {rings.map(([x, y]) => <circle key={x + "-" + y} cx={x} cy={y} r="30" />)}
      </g>
      <rect x="799" y="271" width="11" height="34" rx="5" fill="#6e0e0e" />
      <circle cx="804.500" cy="299" r="5.500" fill="#ff2020" />
      <path d="M814 319L829.500 327.500L827 330L1070 665L1253 911L1251 913L1063 665L822 334.500L817.500 336.500z" fill="#ff3838" />
      <path d="M485 958V935" stroke="#0000ff" strokeWidth="5" /><path d="M485 927l6 13h-12z" fill="#0000b8" />
      <path d="M488 957h17" stroke="#00ff00" strokeWidth="5" /><path d="M515 957l-12 5v-10z" fill="#00d800" />
      <circle cx="485" cy="958" r="5.500" fill="#c00000" />
      <text x="481" y="926" fontSize="14" fill="#2a2af0">Z</text>
      <text x="517" y="962" fontSize="14" fill="#10e010">Y</text>
    </svg>
  );
}

const S = "#3c4a5c";
function ViewTools() {
  const c = <span className="flex h-[15px] items-center"><Caret className="text-[#3c4a5c]" /></span>;
  return (
    <div className="absolute top-[3px] right-1 flex w-[33px] flex-col items-center border border-[#b4b6ba] bg-[#97999e] pt-2.5 pb-[11px]">
      <button aria-label="动态观察"><svg viewBox="0 0 24 24" className="size-6"><path d="M4 16C4 6 9 2 14 3s8 6 6 12-8 8-12 6-4-2-4-5z" fill="#aab8cc" stroke={S} /><circle cx="19" cy="8" r="4" fill="#c4d0e0" stroke={S} /><path d="M2 19C9 17 16 12 20 6M1 19l4-3v5z" fill="none" stroke={S} strokeWidth="1.500" /><ellipse cx="10" cy="9" rx="3" ry="4" fill="#e4ecf4" /></svg></button>
      <button aria-label="二维视图" className="mt-[5px] flex size-6 items-end justify-end border border-[#3c4a5c] bg-[#8496ae] pr-0.5 text-[9px] leading-3 text-[#222]">2D</button>
      <button aria-label="线框" className="mt-[5px]"><svg viewBox="0 0 24 24" className="size-6" stroke={S}><path d="M.5 5.500l6-5h17v17l-5 6H.500z" fill="#d4e8ff" /><path d="M.5 5.500h18v18M18.500 5.500l5-5M6.500 1v16.500h17M.5 23.500l6-6" fill="none" /></svg></button>
      {c}
      <button aria-label="实体"><svg viewBox="0 0 24 24" className="size-6" stroke={S}><path d="M.5 5.500l6-5h17v17l-5 6H.500z" fill="#8496ae" /><path d="M.5 5.500h18v18M18.500 5.500l5-5" fill="none" /></svg></button>
      {c}
      <button aria-label="旋转"><svg viewBox="0 0 24 24" className="size-6" fill="none" stroke={S} strokeWidth="2"><path d="M20 8A10 10 0 1 0 21 17" /><path d="M22 2v7h-7z" fill={S} stroke="none" /></svg></button>
      {c}
      <span className="mb-1 h-px w-6 bg-[#5c6068]" />
      <button aria-label="显示设置"><svg viewBox="0 0 24 24" className="size-6" stroke={S} fill="none"><path d="M.5 4.500l2-4h19l2 4v19H.500z" fill="#8496ae" /><path d="M.5 4.500h23M12 8v14M3.500 10.500h2v2h-2zM3.500 14.500h2v2h-2zM3.500 18.500h2v2h-2zM14.500 10.500h2v2h-2zM14.500 14.500h2v2h-2zM14.500 18.500h2v2h-2zM8 11.500h2M8 15.500h2M8 19.500h2M19 11.500h2M19 15.500h2M19 19.500h2M4 6l1.500 2L8 5.500M15 6l1.500 2L19 5.500" /></svg></button>
    </div>
  );
}

function Splitter({ d }) {
  return (
    <div className="flex w-1 shrink-0 flex-col bg-[#f4f4f4] pt-[372px]">
      <button aria-label="收起面板" className="flex h-[100px] items-center bg-[#5a6672]"><svg viewBox="0 0 4 6" className="h-1.5 w-1"><path d={d} fill="#ccc" /></svg></button>
    </div>
  );
}

/* ---------- display settings ---------- */
const layers = [
  ["轴线", ["轴网", "辅助轴线"]],
  ["柱", ["柱", "构造柱", "砌体柱"]],
  ["墙", ["剪力墙", "人防门框墙", "砌体墙", "砌体加筋", "保温墙", "暗梁", "墙垛", "幕墙"]],
  ["门窗洞", ["门", "窗", "门联窗", "墙洞", "带形窗", "带形洞", "飘窗", "老虎窗", "过梁", "壁龛"]],
  ["梁", ["梁", "连梁", "圈梁"]],
  ["板", ["现浇板"]],
];

function DisplayPanel() {
  const row = "flex h-[21px] items-center border-b border-[#d2d2d2] whitespace-nowrap";
  return (
    <aside className="flex w-[107px] shrink-0 flex-col overflow-hidden border-b border-l border-[#c0c3c8] bg-[#eee]">
      <div className="h-3 shrink-0 border-b border-[#c0c3c8] bg-[#d2d4d9]" />
      <h2 className="flex h-[22px] shrink-0 items-center border-b border-[#c0c3c8] pl-[7px] text-[#555]">显示设置</h2>
      <div className="flex h-[31px] shrink-0 items-end border-b border-[#c0c3c8] pl-px whitespace-nowrap">
        <button className="-mb-px h-[27px] w-[60px] shrink-0 rounded-t border border-b-0 border-[#c0c3c8] bg-white text-[#1a7ae8]">图元显示</button>
        <button className="ml-0.5 h-6 w-[60px] shrink-0 rounded-t bg-[#dcdcdc] text-[#555]">楼层显示</button>
      </div>
      <div className="mt-0.5 ml-0.5 w-[136px] border border-[#c0c3c8] bg-white text-black">
        <div className={row + " justify-center bg-[#eee] text-[#333]"}>图层构件</div>
        <div className={row + " gap-1.5 pl-px"}><Minus />所有构件</div>
        {layers.map(([g, kids], gi) => (
          <React.Fragment key={g + gi}>
            <div className={row + " pl-[7px]"}>
              <span className="flex h-full w-1 shrink-0 items-center border-l border-[#d2d2d2]"><span className="h-px w-full bg-[#d2d2d2]" /></span>
              <Minus /><span className="ml-1.5">{g}</span>
            </div>
            {kids.map((k, i) => (
              <div key={k} className={row + " pl-[7px]"}>
                <span className="h-full w-2.5 shrink-0 border-l border-[#d2d2d2]" />
                <span className="mr-1.5 flex h-full w-[17px] shrink-0 flex-col">
                  <span className="h-[11px] w-full border-b border-l border-[#d2d2d2]" />
                  {i < kids.length - 1 && <span className="flex-1 border-l border-[#d2d2d2]" />}
                </span>
                {k}
              </div>
            ))}
          </React.Fragment>
        ))}
      </div>
    </aside>
  );
}

/* ---------- status bar ---------- */
function StatusBar() {
  const btn = "flex h-[25px] shrink-0 items-center justify-center border border-[#9a9a9e] bg-[#d2d2d4]";
  return (
    <footer className="flex h-[26px] shrink-0 items-end overflow-hidden bg-[#dddde0] whitespace-nowrap text-[#333]">
      <div className="flex h-[23px] w-[154px] shrink-0 items-center bg-[#2e80e0] pr-[9px] text-white">
        <span className="mr-auto pt-1">定义</span>
        <div className="flex gap-[18px]">
          <button aria-label="还原"><svg viewBox="0 0 10 10" className="size-2.5" fill="none" stroke="#fff"><path d="M.5 3.500h6v5h-6zM3.500 3V.500h6v5H7" strokeWidth="1.400" /></svg></button>
          <button aria-label="最大化"><svg viewBox="0 0 10 10" className="size-2.5" fill="none" stroke="#fff"><path d="M1 1.500h8v7H1z" strokeWidth="1.600" /></svg></button>
          <button aria-label="关闭"><svg viewBox="0 0 10 10" className="size-2.5" stroke="#fff" strokeWidth="1.500"><path d="M1 1l8 8M9 1L1 9" /></svg></button>
        </div>
      </div>
      <div className="flex h-[21px] shrink-0 items-center">
        <span className="w-[105px]">119</span>
        <span className="w-[83px]">层高： 3.3</span>
        <span className="w-[133px]">标高： -0.05~3.25</span>
        <span className="w-[102px]">0</span>
        <span className="w-[104px]">隐藏：0</span>
      </div>
      <div className="-mb-1 flex h-[27px] shrink-0">
        <button aria-label="正交" className={btn + " mr-[3px] w-[25px]"}><svg viewBox="0 0 14 14" className="size-3.5" fill="none" stroke="#444"><path d="M1.500 0v12.500H14M1.500 8.500h4v4" /></svg></button>
        <button aria-label="捕捉" className="mr-1.5 flex h-[25px] w-9 shrink-0 items-center justify-center gap-1.5 border border-[#1a90f5] bg-white"><svg viewBox="0 0 16 16" className="size-4" fill="none"><path d="M2.500 2.500h12v12h-12z" stroke={B} strokeWidth="1.300" /><path d="M.5.500h5v5h-5z" fill="#ffb080" stroke={O} /></svg><Caret /></button>
        <button aria-label="交点" className={btn + " mr-[3px] w-[25px]"}><svg viewBox="0 0 16 16" className="size-4" fill="none" stroke="#888"><path d="M0 0l16 16M16 0L0 16" /><circle cx="8" cy="8" r="1.500" fill="#888" /></svg></button>
        <button aria-label="角度" className={btn + " mr-[3px] w-9 gap-1"}><svg viewBox="0 0 16 16" className="size-4" fill="none" stroke="#444"><path d="M11 1L1 14.500h15" /><path d="M5 7h5v3H7z" fill="#444" stroke="none" /></svg><Caret /></button>
        <button aria-label="动态输入" className={btn + " mr-[3px] w-9 gap-1"}><svg viewBox="0 0 16 16" className="size-4" fill="none" stroke="#444"><path d="M3.500 1v7M0 4.500h7" /><path d="M6 10h10v4H6z" fill="#444" stroke="none" /></svg><Caret /></button>
        <button className={btn + " mr-[3px] w-[73px]"}>跨图层选择</button>
        <button className={btn + " w-[61px]"}>折线选择</button>
      </div>
      <span className="flex h-[21px] items-center pl-1.5">按鼠标左键指定第一个角点，或拾取构件图元</span>
    </footer>
  );
}

export default function App() {
  return (
    <div className="flex h-screen flex-col overflow-hidden bg-white font-['Open_Sans','Noto_Sans_CJK_SC',sans-serif] text-[12px] leading-[20px]">
      <Header />
      <Ribbon />
      <ComboBar />
      <main className="flex min-h-0 flex-1">
        <NavTree />
        <div className="ml-1 flex w-[276px] shrink-0 flex-col bg-white pb-px">
          <ComponentList />
          <PropertyTable />
        </div>
        <Splitter d="M4 0v6L0 3z" />
        <div className="relative min-w-0 flex-1 overflow-hidden bg-black">
          <Scene />
          <ViewTools />
        </div>
        <Splitter d="M0 0v6l4-3z" />
        <DisplayPanel />
      </main>
      <StatusBar />
    </div>
  );
}
